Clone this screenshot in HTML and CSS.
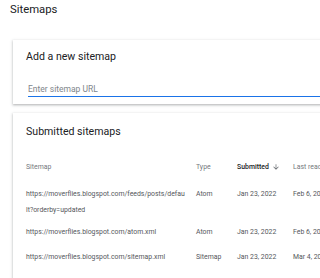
FILE: index.html
```html
<!DOCTYPE html>
<html lang="en">
<head>
    <meta charset="UTF-8">
    <meta name="viewport" content="width=device-width, initial-scale=1.0">
    <title>Sitemaps</title>
    <link rel="stylesheet" href="styles.css">
</head>
<body>
    <h1 class="page-title">Sitemaps</h1>

    <div class="card add-card">
        <h2 class="card-title">Add a new sitemap</h2>
        <div class="input-field">
            <input type="text" placeholder="Enter sitemap URL">
        </div>
    </div>

    <div class="card list-card">
        <h2 class="card-title">Submitted sitemaps</h2>
        <div class="table">
            <div class="row head">
                <div class="cell url">Sitemap</div>
                <div class="cell">Type</div>
                <div class="cell sorted">Submitted
                    <svg class="arrow" viewBox="0 0 24 24" width="8" height="8"><path d="M20 12l-1.41-1.41L13 16.17V4h-2v12.17l-5.58-5.59L4 12l8 8 8-8z"/></svg>
                </div>
                <div class="cell">Last read</div>
            </div>
            <div class="row wrapped">
                <div class="cell url">https://moverflies.blogspot.com/feeds/posts/default?orderby=updated</div>
                <div class="cell">Atom</div>
                <div class="cell">Jan 23, 2022</div>
                <div class="cell">Feb 6, 2022</div>
            </div>
            <div class="row">
                <div class="cell url">https://moverflies.blogspot.com/atom.xml</div>
                <div class="cell">Atom</div>
                <div class="cell">Jan 23, 2022</div>
                <div class="cell">Feb 6, 2022</div>
            </div>
            <div class="row">
                <div class="cell url">https://moverflies.blogspot.com/sitemap.xml</div>
                <div class="cell">Sitemap</div>
                <div class="cell">Jan 23, 2022</div>
                <div class="cell">Mar 4, 2022</div>
            </div>
        </div>
    </div>
</body>
</html>
```

FILE: styles.css
```css
* {
    margin: 0;
    padding: 0;
    box-sizing: border-box;
}

body {
    font-family: Roboto, 'Liberation Sans', sans-serif;
    background: #fff;
    color: #55585c;
    width: 420px;
    overflow: hidden;
}

.page-title {
    font-size: 11.3px;
    font-weight: 400;
    color: #202124;
    padding: 2px 0 0 10px;
    line-height: 16px;
    height: 40px;
}

.card {
    margin-left: 13px;
    background: #fff;
    box-shadow: 0 1px 2px rgba(60, 64, 67, 0.3), 0 1px 3px 1px rgba(60, 64, 67, 0.1);
}

.add-card {
    height: 64px;
    padding: 9px 0 0 13px;
}

.card-title {
    font-size: 10.6px;
    font-weight: 400;
    color: #202124;
    line-height: 16px;
}

.input-field {
    margin: 11.5px 0 0 2px;
    border-bottom: 1.5px solid #1a73e8;
}

.input-field input {
    border: none;
    outline: none;
    background: transparent;
    font-family: inherit;
    font-size: 8.5px;
    width: 100%;
    height: 13px;
    color: #202124;
}

.input-field input::placeholder {
    color: #80868b;
}

.list-card {
    margin-top: 9px;
    padding: 11px 0 20px 13px;
}

.table {
    margin-top: 14px;
    font-size: 6.9px;
    line-height: 16px;
}

.row {
    display: grid;
    grid-template-columns: 170px 41px 56px 1fr;
    align-items: center;
    min-height: 25px;
    padding: 1.5px 0;
}

.row.wrapped .cell {
    align-self: start;
}

.row.head {
    color: #75797e;
    padding: 0;
    margin-bottom: 5px;
}

.cell {
    white-space: nowrap;
}

.cell.url {
    padding-right: 10px;
    white-space: normal;
    word-break: break-all;
}

.sorted {
    color: #202124;
    font-weight: 500;
    display: flex;
    align-items: center;
    gap: 3px;
}

.arrow {
    fill: #5f6368;
}
```
